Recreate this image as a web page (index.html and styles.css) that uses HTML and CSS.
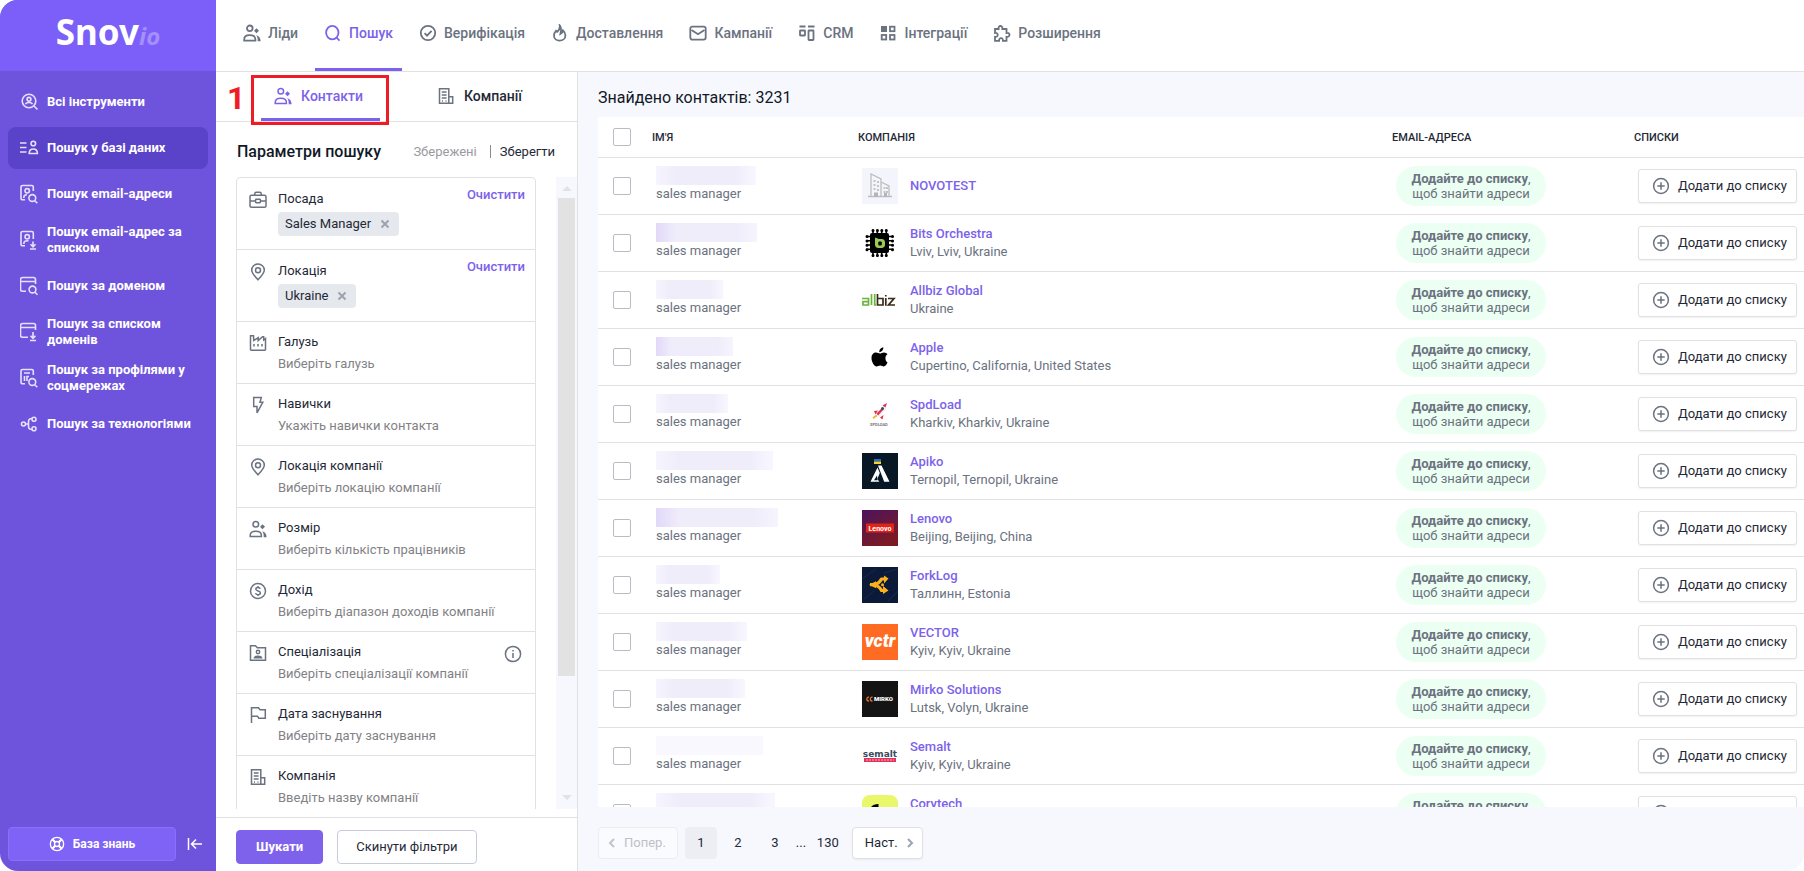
FILE: index.html
```html
<!DOCTYPE html>
<html lang="uk">
<head>
<meta charset="utf-8">
<title>Snov.io</title>
<link rel="stylesheet" href="styles.css">
</head>
<body>
<svg class="sprite" aria-hidden="true">
  <symbol id="i-users" viewBox="0 0 18 18"><circle cx="6.8" cy="4.3" r="2.8"/><path d="M1.2 16.6v-1.2c0-2.6 1.8-4.2 5.6-4.2s5.6 1.6 5.6 4.2v1.2z"/><path class="solid" d="M13.500 4.300l2.500 2.500-2.500 2.500-2.500-2.500zM13.200 11.200c2.800.6 4.400 2.600 4.400 6h-2.900c.1-2.500-.2-4.400-1.500-6z"/></symbol>
  <symbol id="i-search" viewBox="0 0 18 18"><ellipse cx="8.300" cy="8.600" rx="6.200" ry="6.800"/><path d="M12.500 13.500l3 3.200"/></symbol>
  <symbol id="i-check" viewBox="0 0 18 18"><circle cx="9" cy="9" r="7.200"/><path d="M5.600 9.200l2.400 2.400 4.600-4.800"/></symbol>
  <symbol id="i-fire" viewBox="0 0 18 18"><path d="M8.800 1.500c.5 3-.8 4.500-2.500 6.300l-1.300-1C3.700 8.200 3 9.800 3 11.400c0 3 2.300 5.300 5.600 5.300s5.800-2.300 5.800-5.300c0-2-1-3.800-2.400-5-.2 1.600-.8 2.700-2.600 3.600C10.300 6.500 10.600 3.500 8.800 1.500z"/></symbol>
  <symbol id="i-mail" viewBox="0 0 18 18"><rect x="1.300" y="2.600" width="15.400" height="13" rx="2"/><path d="M2.500 6l6.500 4.200L15.500 6"/></symbol>
  <symbol id="i-crm" viewBox="0 0 18 18"><path d="M1.500 2.500h6M10 2.500h6.500"/><rect x="2" y="6.500" width="5" height="5" rx=".5"/><rect x="10.500" y="6.500" width="5" height="9.500" rx=".5"/></symbol>
  <symbol id="i-grid" viewBox="0 0 18 18"><rect class="solid" x="2" y="2" width="6" height="6"/><rect x="11" y="2.700" width="4.500" height="4.500"/><rect x="2.700" y="11" width="4.500" height="4.500"/><rect x="11" y="11" width="4.500" height="4.500"/></symbol>
  <symbol id="i-puzzle" viewBox="0 0 18 18"><path d="M2 5h3.600c-.8-4 4.400-4 3.800 0H13.500v4c4-.8 4 4.400 0 3.800v4h-3.600c.5-3.600-4.200-3.600-3.800 0H2v-4c3.600.6 3.600-4.400 0-3.800z"/></symbol>
  <symbol id="i-building" viewBox="0 0 18 18"><path d="M2.500 1.700h9.300v14.600H2.500zM11.800 9.700h3.900v6.600h-3.900M4.800 5h4.800M4.800 8h4.800M4.800 11h4.800M5 14h1M8.500 14h1"/></symbol>
  <symbol id="i-case" viewBox="0 0 18 18"><rect x="1" y="4.200" width="16" height="12" rx="1.500"/><path d="M5.800 4V2.800c0-1 .5-1.500 1.400-1.500h3.600c.9 0 1.400.5 1.400 1.500V4M1 10h5.500M11.500 10H17"/><rect x="6.600" y="8.300" width="4.800" height="3.400" rx=".6"/></symbol>
  <symbol id="i-pin" viewBox="0 0 18 18"><path d="M9 16.800C5 12.500 2.700 10 2.700 7.200a6.300 6.300 0 0 1 12.600 0C15.300 10 13 12.500 9 16.800z"/><circle cx="9" cy="7.200" r="2.500"/></symbol>
  <symbol id="i-factory" viewBox="0 0 18 18"><path d="M1.500 1.700h3l.3 4.800 4.400-2.800v2.800l4.300-3.800h1.200V6l1.800-1.500v11a.8.800 0 0 1-.8.800H2.300a.8.800 0 0 1-.8-.8z"/><path d="M5 10v2.500M9 10v2.500M13 10v2.500"/></symbol>
  <symbol id="i-bolt" viewBox="0 0 18 18"><path d="M4.700 1.500h7.600L11 6.300h2.800L8 16.800V10.500H4.700z"/></symbol>
  <symbol id="i-dollar" viewBox="0 0 18 18"><circle cx="9" cy="9" r="7.500"/><path d="M11.300 6.800c-.3-1-1.200-1.400-2.300-1.400-1.200 0-2.200.5-2.200 1.700 0 2.500 4.600 1.300 4.600 3.900 0 1.200-1.100 1.700-2.400 1.700s-2.200-.5-2.500-1.600M9 4v1.400M9 12.700V14"/></symbol>
  <symbol id="i-folder" viewBox="0 0 18 18"><path d="M1.500 1.700h5l1.800 2h8.200v12.600h-15z"/><circle cx="9" cy="8" r="1.700"/><path d="M5.500 13.700c.5-2 6.500-2 7 0z"/></symbol>
  <symbol id="i-flag" viewBox="0 0 18 18"><path d="M2.500 17V1.800h7l1.500 2h5.300v8.400h-6.600l-1.200-2H2.500"/></symbol>
  <symbol id="i-info" viewBox="0 0 18 18"><circle cx="9" cy="9" r="7.600"/><path d="M9 8v5M9 5v1.400"/></symbol>
  <symbol id="i-plus" viewBox="0 0 18 18"><circle cx="9" cy="9" r="7.400"/><path d="M9 5.300v7.400M5.300 9h7.400"/></symbol>
  <symbol id="i-x" viewBox="0 0 10 10"><path d="M1.500 1.500l7 7M8.500 1.500l-7 7"/></symbol>
  <symbol id="i-left" viewBox="0 0 10 10"><path d="M7 1L3 5l4 4"/></symbol>
  <symbol id="i-right" viewBox="0 0 10 10"><path d="M3 1l4 4-4 4"/></symbol>
  <symbol id="s-all" viewBox="0 0 20 20"><circle cx="9" cy="9" r="6.800"/><circle cx="9" cy="7.300" r="1.900"/><path d="M5.500 12.200c1-2.200 6-2.200 7 0M14 14l3.500 3.500"/></symbol>
  <symbol id="s-db" viewBox="0 0 20 20"><path d="M0 5h6.500M0 9.500h6.500M0 14h6.500"/><circle cx="13.300" cy="5.500" r="2.300"/><path d="M9.200 15.500c0-3 1.200-4.500 4.100-4.500s4.100 1.500 4.100 4.500z"/></symbol>
  <symbol id="s-email" viewBox="0 0 20 20"><path d="M5 15.800H2.500A1.500 1.500 0 0 1 1 14.300V3a1.500 1.500 0 0 1 1.500-1.500h9.300A1.500 1.500 0 0 1 13.300 3v4"/><circle cx="7.200" cy="6.800" r="2.200"/><path d="M3.800 14c0-2.500 1-3.500 3.200-3.300"/><circle cx="12.300" cy="14" r="3.400"/><path d="M14.800 16.700l2.500 2.500"/></symbol>
  <symbol id="s-emaillist" viewBox="0 0 20 20"><path d="M5 15.800H2.500A1.500 1.500 0 0 1 1 14.300V3a1.500 1.500 0 0 1 1.500-1.500h9.300A1.500 1.500 0 0 1 13.300 3v6"/><circle cx="7.200" cy="6.800" r="2.200"/><path d="M3.800 14c0-2.500 1-3.500 4.700-3.300M13 11.500v5M10.500 14.300l2.500 2.500 2.500-2.500M10 19h6"/></symbol>
  <symbol id="s-domain" viewBox="0 0 20 20"><path d="M6 15.300H2.500a2 2 0 0 1-2-2V3.500a2 2 0 0 1 2-2H13.500a2 2 0 0 1 2 2V8M.5 5.500h15"/><circle cx="12.500" cy="13.500" r="3.400"/><path d="M15 16.200l2.500 2.500"/></symbol>
  <symbol id="s-domainlist" viewBox="0 0 20 20"><path d="M8 15.300H2.500a2 2 0 0 1-2-2V3.500a2 2 0 0 1 2-2H13.500a2 2 0 0 1 2 2V8M.5 5.500h15M13 10v6M10.500 13.800l2.500 2.500 2.500-2.500M10 18.500h6"/></symbol>
  <symbol id="s-social" viewBox="0 0 20 20"><path d="M5 15.800H2.500A1.500 1.500 0 0 1 1 14.300V3a1.500 1.500 0 0 1 1.500-1.500h9.300A1.500 1.500 0 0 1 13.300 3v4M4 5h6M4.500 8v5M7 13V8.500h2"/><circle cx="12.300" cy="14" r="3.400"/><path d="M14.800 16.700l2.500 2.500"/></symbol>
  <symbol id="s-tech" viewBox="0 0 20 20"><circle cx="3.500" cy="10" r="2"/><circle cx="14" cy="5.300" r="2"/><circle cx="14" cy="14.700" r="2"/><path d="M5.500 10h3M12 4.500C9.500 4.500 8.500 5 8.500 7.500v5c0 2.500 1 3 3.500 3"/></symbol>
  <symbol id="s-help" viewBox="0 0 18 18"><circle cx="9" cy="9" r="7.500"/><circle cx="9" cy="9" r="2.800"/><path stroke-width="2.500" d="M4 4l3 3M14 4l-3 3M4 14l3-3M14 14l-3-3"/></symbol>
  <symbol id="s-collapse" viewBox="0 0 18 18"><path d="M2.500 3v12M16 9H6M10 4.500L5.500 9l4.500 4.500"/></symbol>
</svg>

<div class="app">
  <aside class="sidebar">
    <a class="logo" href="#"><span class="logo-main">Snov</span><span class="logo-io">io</span></a>
    <nav class="tools">
      <a class="tool" href="#"><svg class="tool-icon"><use href="#s-all"/></svg><span>Всі інструменти</span></a>
      <a class="tool tool-active" href="#"><svg class="tool-icon"><use href="#s-db"/></svg><span>Пошук у базі даних</span></a>
      <a class="tool" href="#"><svg class="tool-icon"><use href="#s-email"/></svg><span>Пошук email-адреси</span></a>
      <a class="tool" href="#"><svg class="tool-icon"><use href="#s-emaillist"/></svg><span>Пошук email-адрес за списком</span></a>
      <a class="tool" href="#"><svg class="tool-icon"><use href="#s-domain"/></svg><span>Пошук за доменом</span></a>
      <a class="tool" href="#"><svg class="tool-icon"><use href="#s-domainlist"/></svg><span>Пошук за списком доменів</span></a>
      <a class="tool" href="#"><svg class="tool-icon"><use href="#s-social"/></svg><span>Пошук за профілями у соцмережах</span></a>
      <a class="tool" href="#"><svg class="tool-icon"><use href="#s-tech"/></svg><span>Пошук за технологіями</span></a>
    </nav>
    <div class="side-foot">
      <button class="help" type="button"><svg class="icon icon-16"><use href="#s-help"/></svg>База знань</button>
      <button class="collapse" type="button" aria-label="Згорнути"><svg class="icon"><use href="#s-collapse"/></svg></button>
    </div>
  </aside>

  <div class="page">
    <nav class="topnav">
      <a class="nav-item" href="#"><svg class="icon"><use href="#i-users"/></svg>Ліди</a>
      <a class="nav-item nav-active" href="#"><svg class="icon"><use href="#i-search"/></svg>Пошук</a>
      <a class="nav-item" href="#"><svg class="icon"><use href="#i-check"/></svg>Верифікація</a>
      <a class="nav-item" href="#"><svg class="icon"><use href="#i-fire"/></svg>Доставлення</a>
      <a class="nav-item" href="#"><svg class="icon"><use href="#i-mail"/></svg>Кампанії</a>
      <a class="nav-item" href="#"><svg class="icon"><use href="#i-crm"/></svg>CRM</a>
      <a class="nav-item" href="#"><svg class="icon"><use href="#i-grid"/></svg>Інтеграції</a>
      <a class="nav-item" href="#"><svg class="icon"><use href="#i-puzzle"/></svg>Розширення</a>
    </nav>

    <div class="body">
      <section class="panel">
        <div class="tabs">
          <button class="tab tab-active" type="button"><svg class="icon"><use href="#i-users"/></svg>Контакти</button>
          <button class="tab" type="button"><svg class="icon"><use href="#i-building"/></svg>Компанії</button>
          <span class="step">1</span>
          <span class="step-frame"></span>
        </div>
        <div class="panel-head">
          <h2 class="panel-title">Параметри пошуку</h2>
          <button class="link link-muted" type="button">Збережені</button>
          <span class="divider"></span>
          <button class="link" type="button">Зберегти</button>
        </div>
        <div class="scroller">
          <div class="filters">
            <div class="filter filter-set">
              <svg class="icon filter-icon"><use href="#i-case"/></svg>
              <div class="filter-body"><span class="filter-name">Посада</span><span class="chip">Sales Manager<button class="chip-x" type="button" aria-label="Прибрати"><svg class="icon-10"><use href="#i-x"/></svg></button></span></div>
              <button class="clear" type="button">Очистити</button>
            </div>
            <div class="filter filter-set">
              <svg class="icon filter-icon"><use href="#i-pin"/></svg>
              <div class="filter-body"><span class="filter-name">Локація</span><span class="chip">Ukraine<button class="chip-x" type="button" aria-label="Прибрати"><svg class="icon-10"><use href="#i-x"/></svg></button></span></div>
              <button class="clear" type="button">Очистити</button>
            </div>
            <div class="filter"><svg class="icon filter-icon"><use href="#i-factory"/></svg><div class="filter-body"><label class="filter-name" for="f1">Галузь</label><input class="filter-input" id="f1" placeholder="Виберіть галузь"></div></div>
            <div class="filter"><svg class="icon filter-icon"><use href="#i-bolt"/></svg><div class="filter-body"><label class="filter-name" for="f2">Навички</label><input class="filter-input" id="f2" placeholder="Укажіть навички контакта"></div></div>
            <div class="filter"><svg class="icon filter-icon"><use href="#i-pin"/></svg><div class="filter-body"><label class="filter-name" for="f3">Локація компанії</label><input class="filter-input" id="f3" placeholder="Виберіть локацію компанії"></div></div>
            <div class="filter"><svg class="icon filter-icon"><use href="#i-users"/></svg><div class="filter-body"><label class="filter-name" for="f4">Розмір</label><input class="filter-input" id="f4" placeholder="Виберіть кількість працівників"></div></div>
            <div class="filter"><svg class="icon filter-icon"><use href="#i-dollar"/></svg><div class="filter-body"><label class="filter-name" for="f5">Дохід</label><input class="filter-input" id="f5" placeholder="Виберіть діапазон доходів компанії"></div></div>
            <div class="filter"><svg class="icon filter-icon"><use href="#i-folder"/></svg><div class="filter-body"><label class="filter-name" for="f6">Спеціалізація</label><input class="filter-input" id="f6" placeholder="Виберіть спеціалізації компанії"></div><svg class="icon info"><use href="#i-info"/></svg></div>
            <div class="filter"><svg class="icon filter-icon"><use href="#i-flag"/></svg><div class="filter-body"><label class="filter-name" for="f7">Дата заснування</label><input class="filter-input" id="f7" placeholder="Виберіть дату заснування"></div></div>
            <div class="filter"><svg class="icon filter-icon"><use href="#i-building"/></svg><div class="filter-body"><label class="filter-name" for="f8">Компанія</label><input class="filter-input" id="f8" placeholder="Введіть назву компанії"></div></div>
          </div>
          <div class="scrollbar"><span class="arrow arrow-up"></span><span class="track"><span class="thumb"></span></span><span class="arrow arrow-down"></span></div>
        </div>
        <div class="panel-foot">
          <button class="btn btn-primary" type="button">Шукати</button>
          <button class="btn" type="button">Скинути фільтри</button>
        </div>
      </section>

      <main class="results">
        <h1 class="found">Знайдено контактів: 3231</h1>
        <div class="table-wrap">
          <table class="table">
            <thead><tr>
              <th class="c-check"><input class="check" type="checkbox" aria-label="Вибрати всі"></th>
              <th class="c-name">ІМ'Я</th><th>КОМПАНІЯ</th><th class="c-email">EMAIL-АДРЕСА</th><th class="c-list">СПИСКИ</th>
            </tr></thead>
            <tbody>
              <tr>
                <td class="c-check"><input class="check" type="checkbox" aria-label="Вибрати контакт"></td>
                <td class="person"><span class="hidden-name" style="width:100px"></span><span class="sub">sales manager</span></td>
                <td><div class="company"><svg class="mark" viewBox="0 0 36 36"><path fill="#f4f5fc" d="M0 0h36v36H0z"/><path fill="none" stroke="#bdbdbd" stroke-width="1.300" d="M6 28.500h24M9 28V6l10 5v17M19 14l8 4v10"/><path stroke="#c4c4c4" stroke-width="2" stroke-dasharray="2 2" d="M12.500 12v11M16 13v10M22.500 19v6M25 19v6"/><path fill="#b5b5b5" d="M12 24.500h4V29h-4zM22 25h3v4h-3z"/></svg><div><a class="cname" href="#">NOVOTEST</a></div></div></td>
                <td><div class="pill"><b>Додайте до списку</b>,<br>щоб знайти адреси</div></td>
                <td><button class="add" type="button"><svg class="icon"><use href="#i-plus"/></svg>Додати до списку</button></td>
              </tr>
              <tr>
                <td class="c-check"><input class="check" type="checkbox" aria-label="Вибрати контакт"></td>
                <td class="person"><span class="hidden-name tinted" style="width:101px"></span><span class="sub">sales manager</span></td>
                <td><div class="company"><svg class="mark" viewBox="0 0 36 36"><rect x="8" y="8" width="19" height="20" rx="2"/><path stroke="#000" stroke-width="1.600" d="M11 4.500v27M15.300 4.500v27M19.700 4.500v27M24.300 4.500v27M4 11.500h27.500M4 15.700h27.500M4 20h27.500M4 24.300h27.500"/><path stroke="#000" stroke-width="3" stroke-linecap="round" stroke-dasharray="0 4.430" d="M11 5.500h14M11 30.500h14M5 11.500v14M30.500 11.500v14"/><path fill="#9c5" d="M13 12.500l4 1.500h2.500c2.500 0 3.500 1.300 3.500 3.500v2c0 2.300-1.200 3.500-3.500 3.500h-3c-2.300 0-3.500-1.200-3.500-3.500z"/><rect x="16.300" y="16.500" width="3.500" height="4" rx="1"/></svg><div><a class="cname" href="#">Bits Orchestra</a><span class="sub">Lviv, Lviv, Ukraine</span></div></div></td>
                <td><div class="pill"><b>Додайте до списку</b>,<br>щоб знайти адреси</div></td>
                <td><button class="add" type="button"><svg class="icon"><use href="#i-plus"/></svg>Додати до списку</button></td>
              </tr>
              <tr>
                <td class="c-check"><input class="check" type="checkbox" aria-label="Вибрати контакт"></td>
                <td class="person"><span class="hidden-name" style="width:67px"></span><span class="sub">sales manager</span></td>
                <td><div class="company"><svg class="mark" viewBox="0 0 36 36"><g fill="none" stroke-width="1.700"><path stroke="#6cb33f" d="M0 16.500h6.500V23H1v-3.300h5.500M9.500 12v11M12.700 12v11h1.500"/><path stroke="#3b2a1a" d="M15.500 12v11H21v-6.500h-5.500M23.800 16v7.800M26 16.500h6L26.500 23H33M23.800 13v1.500"/></g></svg><div><a class="cname" href="#">Allbiz Global</a><span class="sub">Ukraine</span></div></div></td>
                <td><div class="pill"><b>Додайте до списку</b>,<br>щоб знайти адреси</div></td>
                <td><button class="add" type="button"><svg class="icon"><use href="#i-plus"/></svg>Додати до списку</button></td>
              </tr>
              <tr>
                <td class="c-check"><input class="check" type="checkbox" aria-label="Вибрати контакт"></td>
                <td class="person"><span class="hidden-name tinted" style="width:77px"></span><span class="sub">sales manager</span></td>
                <td><div class="company"><svg class="mark" viewBox="0 0 36 36"><path d="M17.300 13.300c-.2-2.700 2-4.900 4-5 .3 2.500-1.800 4.900-4 5zM25.500 23.600c-.9 2-2.200 3.900-3.700 3.900s-1.900-.9-3.600-.9-2.200.9-3.600.9c-2.500 0-5.100-4.800-5.100-8.500 0-3.500 2.200-5.400 4.500-5.400 1.600 0 2.700 1 3.900 1s2.300-1.100 4.200-1.100c1.300 0 2.600.7 3.400 1.800-3 1.800-2.500 6.300 0 8.300z"/></svg><div><a class="cname" href="#">Apple</a><span class="sub">Cupertino, California, United States</span></div></div></td>
                <td><div class="pill"><b>Додайте до списку</b>,<br>щоб знайти адреси</div></td>
                <td><button class="add" type="button"><svg class="icon"><use href="#i-plus"/></svg>Додати до списку</button></td>
              </tr>
              <tr>
                <td class="c-check"><input class="check" type="checkbox" aria-label="Вибрати контакт"></td>
                <td class="person"><span class="hidden-name" style="width:72px"></span><span class="sub">sales manager</span></td>
                <td><div class="company"><svg class="mark" viewBox="0 0 36 36"><path fill="#e8edf2" d="M15 18l6-8 3 3-7 8z"/><path fill="#e0304e" d="M20.500 9.500L25 7l-1.500 4.500zM12 15l4-.5-2.500 4zM18 21.500l3.500-2.500-1 4.500zM14.500 17.500l5-5 1.500 1.500-5 5.500z"/><path fill="#f5b335" d="M10.500 21.500l3.500-3 1.500 1.500-4 3z"/><circle cx="20.500" cy="12.500" r="1.500" fill="#446"/><text x="8" y="30" font-size="4" font-weight="700" fill="#777">SPDLOAD</text></svg><div><a class="cname" href="#">SpdLoad</a><span class="sub">Kharkiv, Kharkiv, Ukraine</span></div></div></td>
                <td><div class="pill"><b>Додайте до списку</b>,<br>щоб знайти адреси</div></td>
                <td><button class="add" type="button"><svg class="icon"><use href="#i-plus"/></svg>Додати до списку</button></td>
              </tr>
              <tr>
                <td class="c-check"><input class="check" type="checkbox" aria-label="Вибрати контакт"></td>
                <td class="person"><span class="hidden-name" style="width:117px"></span><span class="sub">sales manager</span></td>
                <td><div class="company"><svg class="mark" viewBox="0 0 36 36"><path fill="#071824" d="M0 0h36v36H0z"/><path fill="#2a6fd6" d="M12 6h7v2.500h-7z"/><path fill="#f5d327" d="M12 8.500h7V11h-7z"/><path fill="#fff" d="M16 12.500h3.500l8 16.300h-5.300zM15.500 14.500l2.300 5.500-2.500 6 2 2.800H8.500z"/><path fill="#071824" d="M15 22.500l-3 4.800h3.500z"/></svg><div><a class="cname" href="#">Apiko</a><span class="sub">Ternopil, Ternopil, Ukraine</span></div></div></td>
                <td><div class="pill"><b>Додайте до списку</b>,<br>щоб знайти адреси</div></td>
                <td><button class="add" type="button"><svg class="icon"><use href="#i-plus"/></svg>Додати до списку</button></td>
              </tr>
              <tr>
                <td class="c-check"><input class="check" type="checkbox" aria-label="Вибрати контакт"></td>
                <td class="person"><span class="hidden-name tinted" style="width:122px"></span><span class="sub">sales manager</span></td>
                <td><div class="company"><svg class="mark" viewBox="0 0 36 36"><defs><linearGradient id="lg" x1="0" y1="0" x2=".5" y2="1"><stop offset="0" stop-color="#4a145e"/><stop offset="1" stop-color="#7c1a24"/></linearGradient></defs><path fill="url(#lg)" d="M0 0h36v36H0z"/><path fill="#e2231a" d="M4 13.500h28v9H4z"/><text x="18" y="20.500" text-anchor="middle" font-size="7" font-weight="700" fill="#fff">Lenovo</text></svg><div><a class="cname" href="#">Lenovo</a><span class="sub">Beijing, Beijing, China</span></div></div></td>
                <td><div class="pill"><b>Додайте до списку</b>,<br>щоб знайти адреси</div></td>
                <td><button class="add" type="button"><svg class="icon"><use href="#i-plus"/></svg>Додати до списку</button></td>
              </tr>
              <tr>
                <td class="c-check"><input class="check" type="checkbox" aria-label="Вибрати контакт"></td>
                <td class="person"><span class="hidden-name" style="width:64px"></span><span class="sub">sales manager</span></td>
                <td><div class="company"><svg class="mark" viewBox="0 0 36 36"><path fill="#0b1a38" d="M0 0h36v36H0z"/><path fill="none" stroke="#162a52" d="M0 12L14 2M2 32l10-8M26 34l10-10M22 6l14-4"/><path fill="none" stroke="#fbb01c" stroke-width="3.200" stroke-linejoin="round" d="M8 17.700h7M12 17.500c4-.5 6-2.500 7.500-5.500H24M12 18c4 .5 6 2.500 7.500 5.500H24"/><path fill="#fbb01c" d="M22 8.500l4.500 3-4.500 5zM21 19l5.500 4.500L21 27zM7 17.700l7-3.500v7z"/><circle cx="20.500" cy="17.700" r="1.500" fill="#fbb01c"/></svg><div><a class="cname" href="#">ForkLog</a><span class="sub">Таллинн, Estonia</span></div></div></td>
                <td><div class="pill"><b>Додайте до списку</b>,<br>щоб знайти адреси</div></td>
                <td><button class="add" type="button"><svg class="icon"><use href="#i-plus"/></svg>Додати до списку</button></td>
              </tr>
              <tr>
                <td class="c-check"><input class="check" type="checkbox" aria-label="Вибрати контакт"></td>
                <td class="person"><span class="hidden-name" style="width:91px"></span><span class="sub">sales manager</span></td>
                <td><div class="company"><svg class="mark" viewBox="0 0 36 36"><path fill="#ff6b22" d="M0 0h36v36H0z"/><text x="18" y="23" text-anchor="middle" font-size="18" font-weight="900" font-style="italic" fill="#fff">vctr</text></svg><div><a class="cname" href="#">VECTOR</a><span class="sub">Kyiv, Kyiv, Ukraine</span></div></div></td>
                <td><div class="pill"><b>Додайте до списку</b>,<br>щоб знайти адреси</div></td>
                <td><button class="add" type="button"><svg class="icon"><use href="#i-plus"/></svg>Додати до списку</button></td>
              </tr>
              <tr>
                <td class="c-check"><input class="check" type="checkbox" aria-label="Вибрати контакт"></td>
                <td class="person"><span class="hidden-name" style="width:89px"></span><span class="sub">sales manager</span></td>
                <td><div class="company"><svg class="mark" viewBox="0 0 36 36"><path fill="#141414" d="M0 0h36v36H0z"/><path fill="none" stroke="#f07a32" stroke-width="1.200" d="M7 15.800c-3 .5-3 4 0 4.400M10.500 15.800c-3 .5-3 4 0 4.400"/><text x="12" y="20.200" font-size="6" font-weight="900" fill="#fff">MIRKO</text></svg><div><a class="cname" href="#">Mirko Solutions</a><span class="sub">Lutsk, Volyn, Ukraine</span></div></div></td>
                <td><div class="pill"><b>Додайте до списку</b>,<br>щоб знайти адреси</div></td>
                <td><button class="add" type="button"><svg class="icon"><use href="#i-plus"/></svg>Додати до списку</button></td>
              </tr>
              <tr>
                <td class="c-check"><input class="check" type="checkbox" aria-label="Вибрати контакт"></td>
                <td class="person"><span class="hidden-name faint" style="width:107px"></span><span class="sub">sales manager</span></td>
                <td><div class="company"><svg class="mark" viewBox="0 0 36 36"><text x="18" y="18.500" text-anchor="middle" font-size="9" font-weight="700" font-family="DejaVu Sans" fill="#3b4a5c">semalt</text><path fill="#e0355a" d="M2 20h32v4H2z"/><path stroke="#f7b3c2" stroke-dasharray="2 1" d="M4 22h28"/></svg><div><a class="cname" href="#">Semalt</a><span class="sub">Kyiv, Kyiv, Ukraine</span></div></div></td>
                <td><div class="pill"><b>Додайте до списку</b>,<br>щоб знайти адреси</div></td>
                <td><button class="add" type="button"><svg class="icon"><use href="#i-plus"/></svg>Додати до списку</button></td>
              </tr>
              <tr>
                <td class="c-check"><input class="check" type="checkbox" aria-label="Вибрати контакт"></td>
                <td class="person"><span class="hidden-name" style="width:119px"></span><span class="sub">sales manager</span></td>
                <td><div class="company"><svg class="mark" viewBox="0 0 36 36"><rect width="36" height="36" rx="8" fill="#e9f76a"/><path d="M8 14c1-3 4-5 8.500-5v18c-5 0-8.500-4-8.500-13z"/></svg><div><a class="cname" href="#">Corytech</a><span class="sub">Ukraine</span></div></div></td>
                <td><div class="pill"><b>Додайте до списку</b>,<br>щоб знайти адреси</div></td>
                <td><button class="add" type="button"><svg class="icon"><use href="#i-plus"/></svg>Додати до списку</button></td>
              </tr>
            </tbody>
          </table>
        </div>
        <nav class="pager">
          <button class="page-btn" type="button" disabled><svg class="icon-10"><use href="#i-left"/></svg>Попер.</button>
          <button class="num num-active" type="button">1</button>
          <button class="num" type="button">2</button>
          <button class="num" type="button">3</button>
          <span class="dots">...</span>
          <button class="num num-last" type="button">130</button>
          <button class="page-btn" type="button">Наст.<svg class="icon-10"><use href="#i-right"/></svg></button>
        </nav>
      </main>
    </div>
  </div>
</div>
</body>
</html>
```
FILE: styles.css
```css
* { box-sizing: border-box; }
body { margin: 0; background: #fff; color: #1f2937; font: 13px/16px Roboto, "Noto Sans", sans-serif; }
button, input { font: inherit; color: inherit; margin: 0; padding: 0; border: 0; background: none; }
a { color: inherit; text-decoration: none; }
svg { flex: none; fill: none; stroke: currentColor; }
.sprite { position: absolute; width: 0; height: 0; }
.solid { fill: currentColor; stroke: none; }
.icon { width: 18px; height: 18px; stroke-width: 1.5; }
.icon-16 { width: 16px; height: 16px; stroke-width: 1.5; }
.icon-10 { width: 10px; height: 10px; stroke-width: 2; display: block; }

.app { display: flex; height: 100vh; overflow: hidden; border-radius: 18px; background: #f7f8fd; }

.sidebar { flex: none; width: 216px; display: flex; flex-direction: column; background: #6e54dc; color: #fff; }
.logo { display: flex; align-items: baseline; justify-content: center; height: 71px; padding-top: 8px; background: #7c5ff8; font-family: "Noto Sans", sans-serif; font-weight: 700; line-height: 48px; }
.logo-main { font-size: 35px; }
.logo-io { font-size: 24px; font-style: italic; color: #a48ffc; }
.tools { flex: 1; display: flex; flex-direction: column; gap: 4px; padding: 10px 8px; }
.tool { display: flex; align-items: center; gap: 7px; height: 42px; padding: 0 12px; border-radius: 8px; font-weight: 700; }
.tool-active { background: #5a42c9; }
.tool-icon { width: 20px; height: 20px; stroke-width: 1.6; color: #e6e0ff; overflow: visible; }
.side-foot { display: flex; align-items: center; gap: 10px; padding: 0 8px 10px; }
.help { display: flex; align-items: center; justify-content: center; gap: 8px; width: 168px; height: 34px; border: 1px solid #8a70f8; border-radius: 4px; background: #7f62f6; font-size: 12px; font-weight: 700; }
.collapse { display: flex; }

.page { flex: 1; min-width: 0; display: flex; flex-direction: column; }
.topnav { flex: none; display: flex; gap: 8px; height: 72px; padding: 0 18px; background: #fff; border-bottom: 1px solid #e1e1e4; }
.nav-item { display: flex; align-items: center; gap: 7px; padding: 0 9px 3px; border-bottom: 3px solid transparent; border-radius: 3px 3px 0 0; font-size: 14px; font-weight: 500; color: #6b7280; }
.nav-item .icon { stroke-width: 1.8; }
.nav-active { color: #7c62ea; border-image: linear-gradient(#7c62ea, #7c62ea) 1; }

.body { flex: 1; min-height: 0; display: flex; }
.panel { flex: none; width: 362px; display: flex; flex-direction: column; background: #fff; border-right: 1px solid #e1e1e4; }
.tabs { position: relative; flex: none; display: flex; gap: 42px; height: 50px; padding-left: 45px; border-bottom: 1px solid #e1e1e4; }
.tab { display: flex; align-items: center; justify-content: center; gap: 9px; width: 119px; padding: 2px 4px 0 0; border-bottom: 3px solid transparent; font-size: 14px; font-weight: 500; }
.tab .icon { color: #6b7280; }
.tab-active, .tab-active .icon { color: #7c62ea; }
.tab-active { border-color: #7c62ea; }
.step { position: absolute; left: 11px; top: 8px; font-size: 32px; line-height: 36px; font-weight: 700; color: #ee1c25; }
.step-frame { position: absolute; left: 35px; top: 3px; width: 138px; height: 50px; border: 3px solid #ee1c25; }
.panel-head { flex: none; display: flex; align-items: center; height: 55px; padding: 4px 22px 0 21px; }
.panel-title { flex: 1; margin: 0; font-size: 16px; font-weight: 500; color: #111827; }
.link { padding: 0; }
.link-muted { color: #9a9a9e; }
.divider { width: 1px; height: 13px; margin: 0 9px 0 13px; background: #8a8a90; }
.scroller { flex: 1; min-height: 0; display: flex; justify-content: space-between; margin-bottom: 8px; padding-left: 20px; overflow: hidden; }
.filters { width: 300px; height: max-content; border: 1px solid #e1e1e4; border-radius: 4px; }
.filter { display: flex; align-items: flex-start; height: 62px; padding: 12px 13px 0 12px; border-bottom: 1px solid #e1e1e4; }
.filter-set { height: 72px; padding-top: 13px; padding-right: 10px; }
.filter-icon { margin-right: 11px; color: #6b7280; }
.filter-body { flex: 1; display: flex; flex-direction: column; align-items: flex-start; }
.filter-name { color: #1f2937; }
.filter-input { width: 100%; height: 16px; margin-top: 6px; outline: 0; }
.filter-input::placeholder { color: #828286; opacity: 1; }
.chip { display: flex; align-items: center; gap: 9px; height: 24px; margin-top: 5px; padding: 0 9px 0 7px; border-radius: 4px; background: #e5e8ec; }
.chip-x { color: #9ca3af; }
.clear { margin-top: -4px; font-weight: 500; color: #7c62ea; }
.info { margin: 1px 0; color: #6b7280; }
.scrollbar { display: flex; flex-direction: column; align-items: center; justify-content: space-between; width: 21px; padding: 9px 0; background: #f7f8fd; }
.track { flex: 1; width: 17px; margin: 7px 0; }
.thumb { display: block; height: 81%; background: #e2e2e3; }
.arrow { border: 5px solid transparent; }
.arrow-up { border-top: 0; border-bottom-color: #e2e2e5; }
.arrow-down { border-bottom: 0; border-top-color: #e2e2e5; }
.panel-foot { flex: none; display: flex; gap: 14px; padding: 12px 20px 7px; border-top: 1px solid #e1e1e4; }
.btn { height: 34px; padding: 0 18px; border: 1px solid #c6ccd8; border-radius: 4px; background: #fff; }
.btn-primary { padding: 0 19px; border-color: #7f62ec; background: #7f62ec; color: #fff; font-weight: 700; }

.results { flex: 1; min-width: 0; display: flex; flex-direction: column; padding-left: 20px; }
.found { flex: none; margin: 0; padding: 14px 0 7px; font-size: 16px; line-height: 24px; font-weight: 400; color: #111827; }
.table-wrap { flex: 1; min-height: 0; overflow: hidden; background: #fff; }
.table { width: 100%; table-layout: fixed; border-collapse: separate; border-spacing: 0; }
.table th, .table td { padding: 0; border-bottom: 1px solid #e1e1e4; text-align: left; }
.table th { height: 41px; padding-top: 1px; font-size: 11px; font-weight: 500; }
.table td { height: 57px; padding-left: 4px; }
.table .c-check { width: 54px; padding: 0 0 0 15px; }
.table .person { padding-bottom: 3px; }
.c-name { width: 206px; }
.c-email { width: 242px; }
.c-list { width: 170px; }
.check { appearance: none; display: block; width: 18px; height: 18px; border: 1px solid #b9bcc2; border-radius: 2px; background: #fff; }
.hidden-name { display: block; height: 19px; background: linear-gradient(90deg, #f6f4fd, #f0edfb 20%, #f0edfb 80%, #f8f7fe); }
.tinted { background: linear-gradient(90deg, #e2d8f9, #f0edfb 20%, #f0edfb 80%, #f6f4fd); }
.faint { background: #f9f8fe; }
.sub { display: block; line-height: 18px; color: #6b7280; }
.company { display: flex; align-items: center; gap: 12px; }
.mark { width: 36px; height: 36px; fill: #000; stroke: none; font-family: Roboto, sans-serif; }
.cname { display: block; line-height: 18px; font-weight: 500; color: #7c62ea; }
.pill { width: 150px; padding: 5px 0; border-radius: 20px; background: #ebfff2; line-height: 15px; text-align: center; color: #6b7280; }
.add { display: flex; align-items: center; gap: 8px; width: 159px; height: 34px; padding-left: 13px; border: 1px solid #e1e1e4; border-radius: 3px; background: #fff; box-shadow: 0 1px 2px #0000000f; }
.add .icon { color: #6b7280; }

.pager { flex: none; display: flex; align-items: center; gap: 5px; padding: 20px 0 12px; }
.page-btn { display: flex; align-items: center; justify-content: center; gap: 7px; height: 32px; padding: 0 7px 0 12px; border: 1px solid #e1e1e4; border-radius: 4px; background: #fff; box-shadow: 0 1px 2px #0000000f; }
.page-btn .icon-10 { color: #9ca3af; }
.page-btn:disabled { margin-right: 2px; padding: 0 11px 0 8px; border-color: #ececf1; background: #fafbfe; box-shadow: none; color: #bfc0c6; }
.page-btn:disabled .icon-10 { color: #c3c4cb; }
.num { width: 32px; height: 32px; border-radius: 4px; }
.num-active { background: #edeef3; }
.num-last { width: 34px; margin-right: 2px; }
.dots { width: 10px; text-align: center; }
```
